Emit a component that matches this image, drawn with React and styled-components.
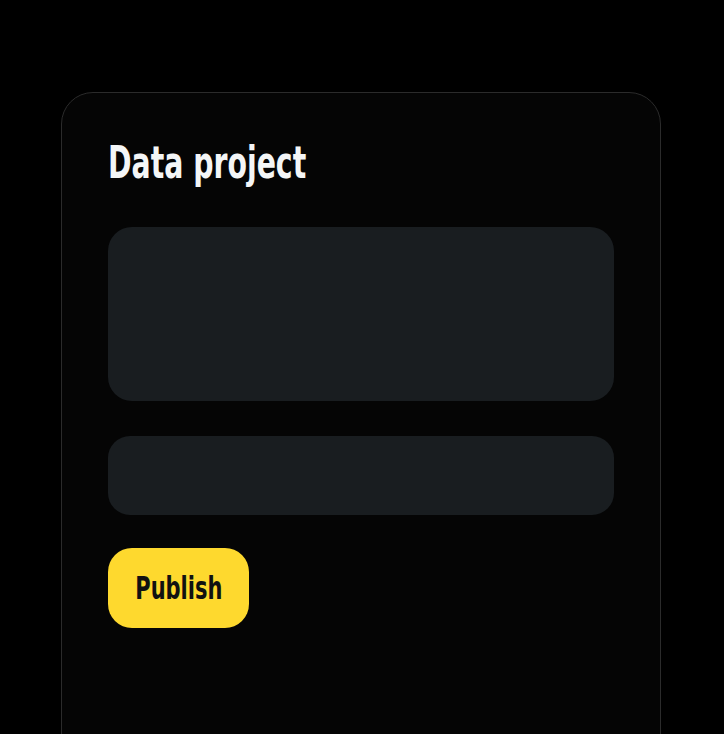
import React from "react";
import styled, { createGlobalStyle } from "styled-components";

const Global = createGlobalStyle`
  html, body { margin: 0; padding: 0; background: #000; overflow: hidden; }
  body { font-family: "DejaVu Sans Condensed", "DejaVu Sans", sans-serif; }
`;

const Page = styled.div`
  width: 724px;
  height: 734px;
  background: #000;
  padding: 92px 0 0 61px;
  box-sizing: border-box;
  overflow: hidden;
`;

const Card = styled.section`
  width: 600px;
  height: 720px;
  box-sizing: border-box;
  border: 1.5px solid #2b2b2b;
  border-radius: 32px;
  background: #050505;
  padding: 47px 46px 0 46px;
  display: flex;
  flex-direction: column;
`;

const Title = styled.h1`
  margin: 0;
  color: #f4f6f7;
  font-family: "DejaVu Sans Condensed", "DejaVu Sans", sans-serif;
  font-weight: 700;
  font-size: 45px;
  line-height: 46px;
  white-space: nowrap;
`;

const Narrow = styled.span`
  display: inline-block;
  transform: scaleX(${(p) => p.$scale});
  transform-origin: ${(p) => p.$origin || "left"} center;
`;

const Field = styled.div`
  background: #191d20;
  border-radius: ${(p) => p.$radius}px;
  height: ${(p) => p.$h}px;
  margin-top: ${(p) => p.$mt}px;
`;

const Button = styled.button`
  margin-top: 33px;
  align-self: flex-start;
  width: 141px;
  height: 80px;
  border: none;
  border-radius: 24px;
  background: #fed92e;
  color: #111;
  font-family: "DejaVu Sans Condensed", "DejaVu Sans", sans-serif;
  font-weight: 700;
  font-size: 31.5px;
  padding: 0;
  cursor: pointer;
  display: flex;
  align-items: center;
  justify-content: center;
  white-space: nowrap;
`;

export default function App() {
  return (
    <>
      <Global />
      <Page>
        <Card>
          <Title>
            <Narrow $scale={0.7}>Data project</Narrow>
          </Title>
          <Field $h={174} $mt={41} $radius={24} />
          <Field $h={79} $mt={35} $radius={22} />
          <Button>
            <Narrow $scale={0.74} $origin="center">Publish</Narrow>
          </Button>
        </Card>
      </Page>
    </>
  );
}
